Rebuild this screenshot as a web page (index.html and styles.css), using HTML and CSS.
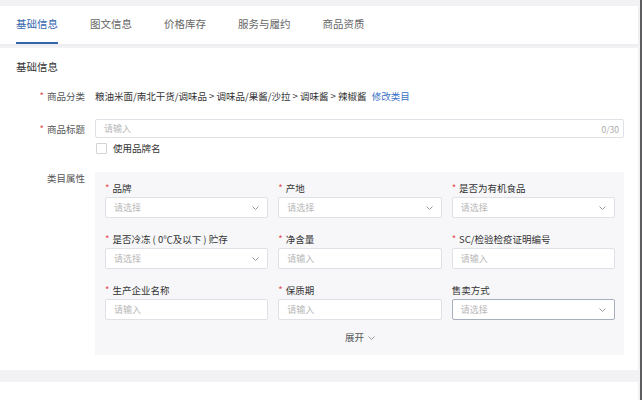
FILE: index.html
```html
<!DOCTYPE html>
<html>
<head>
    <meta charset="utf-8">
    <title>商品发布</title>
    <link rel="stylesheet" href="styles.css">
</head>
<body>
    <div class="tabs">
        <div class="tab active">基础信息</div>
        <div class="tab">图文信息</div>
        <div class="tab">价格库存</div>
        <div class="tab">服务与履约</div>
        <div class="tab">商品资质</div>
    </div>

    <div class="card">
        <div class="card-title">基础信息</div>

        <div class="form-row row-category">
            <div class="form-label"><span class="req">*</span>商品分类</div>
            <div class="form-value">粮油米面/南北干货/调味品 &gt; 调味品/果酱/沙拉 &gt; 调味酱 &gt; 辣椒酱 <span class="link">修改类目</span></div>
        </div>

        <div class="form-row row-title">
            <div class="form-label"><span class="req">*</span>商品标题</div>
            <div class="control wide">
                <span class="placeholder">请输入</span>
                <span class="count">0/30</span>
            </div>
        </div>

        <div class="check-row">
            <span class="checkbox"></span>
            <span>使用品牌名</span>
        </div>

        <div class="form-row row-attrs">
            <div class="form-label">类目属性</div>
            <div class="panel">
                <div class="grid">
                    <div class="field">
                        <div class="field-label"><span class="req">*</span>品牌</div>
                        <div class="control"><span class="placeholder">请选择</span><svg class="arrow" width="7" height="4" viewBox="0 0 7 4"><polyline points="0.5,0.5 3.5,3.5 6.5,0.5" fill="none" stroke="#9a9a9a" stroke-width="1"/></svg></div>
                    </div>
                    <div class="field">
                        <div class="field-label"><span class="req">*</span>产地</div>
                        <div class="control"><span class="placeholder">请选择</span><svg class="arrow" width="7" height="4" viewBox="0 0 7 4"><polyline points="0.5,0.5 3.5,3.5 6.5,0.5" fill="none" stroke="#9a9a9a" stroke-width="1"/></svg></div>
                    </div>
                    <div class="field">
                        <div class="field-label"><span class="req">*</span>是否为有机食品</div>
                        <div class="control"><span class="placeholder">请选择</span><svg class="arrow" width="7" height="4" viewBox="0 0 7 4"><polyline points="0.5,0.5 3.5,3.5 6.5,0.5" fill="none" stroke="#9a9a9a" stroke-width="1"/></svg></div>
                    </div>

                    <div class="field">
                        <div class="field-label"><span class="req">*</span>是否冷冻 ( 0℃及以下 ) 贮存</div>
                        <div class="control"><span class="placeholder">请选择</span><svg class="arrow" width="7" height="4" viewBox="0 0 7 4"><polyline points="0.5,0.5 3.5,3.5 6.5,0.5" fill="none" stroke="#9a9a9a" stroke-width="1"/></svg></div>
                    </div>
                    <div class="field">
                        <div class="field-label"><span class="req">*</span>净含量</div>
                        <div class="control"><span class="placeholder">请输入</span></div>
                    </div>
                    <div class="field">
                        <div class="field-label"><span class="req">*</span>SC/检验检疫证明编号</div>
                        <div class="control"><span class="placeholder">请输入</span></div>
                    </div>

                    <div class="field">
                        <div class="field-label"><span class="req">*</span>生产企业名称</div>
                        <div class="control"><span class="placeholder">请输入</span></div>
                    </div>
                    <div class="field">
                        <div class="field-label"><span class="req">*</span>保质期</div>
                        <div class="control"><span class="placeholder">请输入</span></div>
                    </div>
                    <div class="field">
                        <div class="field-label">售卖方式</div>
                        <div class="control hover"><span class="placeholder">请选择</span><svg class="arrow" width="7" height="4" viewBox="0 0 7 4"><polyline points="0.5,0.5 3.5,3.5 6.5,0.5" fill="none" stroke="#9a9a9a" stroke-width="1"/></svg></div>
                    </div>
                </div>
                <div class="expand">展开 <svg width="7" height="4" viewBox="0 0 7 4"><polyline points="0.5,0.5 3.5,3.5 6.5,0.5" fill="none" stroke="#9a9a9a" stroke-width="1"/></svg></div>
            </div>
        </div>
    </div>

    <div class="card card-next"></div>
</body>
</html>
```

FILE: styles.css
```css
html {
    background: #5e5e60;
}
body {
    margin: 0;
    width: 640px;
    padding-top: 6px;
    background: #f2f2f4;
    font-family: "Noto Sans CJK SC", "Noto Sans", sans-serif;
    font-size: 9.5px;
    color: #333;
}
.tabs {
    display: flex;
    gap: 32px;
    height: 38px;
    margin-right: 2px;
    padding-left: 16px;
    background: #fff;
    box-shadow: 0 1px 3px rgba(0, 0, 0, 0.04);
}
.tab {
    font-size: 10.5px;
    line-height: 36px;
    color: #666;
    border-bottom: 2px solid transparent;
}
.tab.active {
    color: #3565ad;
    border-bottom-color: #3565ad;
}
.card {
    margin: 4px 2px 0 0;
    padding: 12px 14px 15px 16px;
    background: #fff;
}
.card-next {
    margin-top: 12px;
    height: 40px;
    padding: 0;
}
.card-title {
    font-size: 10.5px;
    line-height: 14px;
    color: #333;
}
.form-row {
    display: flex;
}
.form-label {
    width: 69px;
    margin-right: 10px;
    flex-shrink: 0;
    text-align: right;
    color: #555;
}
.req {
    color: #e4484e;
    margin-right: 3px;
}
.row-category {
    margin-top: 12px;
    line-height: 20px;
}
.form-value {
    color: #333;
}
.link {
    margin-left: 3px;
    color: #3a6fc4;
}
.row-title {
    margin-top: 13px;
    align-items: center;
}
.control {
    height: 21px;
    box-sizing: border-box;
    display: flex;
    align-items: center;
    justify-content: space-between;
    padding: 0 8px;
    background: #fff;
    border: 1px solid #dfe1e6;
    border-radius: 2px;
}
.control.wide {
    flex: 1;
    height: 19px;
    padding-right: 4px;
}
.control.hover {
    border-color: #a9b0bd;
}
.placeholder {
    font-size: 9px;
    color: #b8b8b8;
}
.count {
    font-size: 8.5px;
    color: #aaa;
}
.check-row {
    display: flex;
    align-items: center;
    gap: 6px;
    margin: 4px 0 0 80px;
    line-height: 12px;
}
.checkbox {
    width: 9px;
    height: 9px;
    border: 1px solid #d4d4d4;
    border-radius: 1px;
    background: #fff;
}
.row-attrs {
    margin-top: 18px;
}
.row-attrs .form-label {
    line-height: 12px;
}
.panel {
    flex: 1;
    padding: 9px 9px 11px 10px;
    background: #f7f7f9;
}
.grid {
    display: grid;
    grid-template-columns: repeat(3, 1fr);
    column-gap: 10px;
    row-gap: 14px;
}
.field-label {
    line-height: 14px;
    margin-bottom: 2px;
    color: #333;
}
.expand {
    margin-top: 10px;
    line-height: 14px;
    text-align: center;
    color: #555;
}
.expand svg {
    margin-left: 2px;
    vertical-align: middle;
}
```
